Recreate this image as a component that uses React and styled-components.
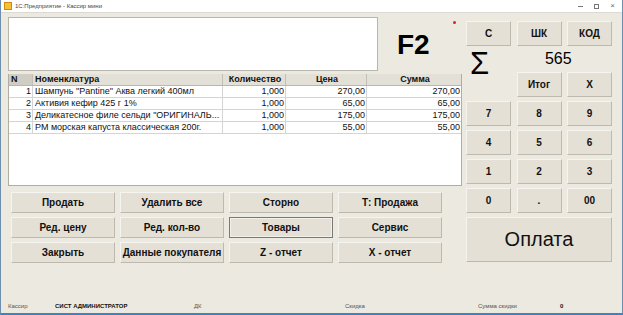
import React from "react";
import styled, { createGlobalStyle } from "styled-components";

const GlobalStyle = createGlobalStyle`
  html, body {
    margin: 0;
    padding: 0;
    background: #ffffff;
  }
  body {
    font-family: "Liberation Sans", Arial, sans-serif;
  }
`;

const Window = styled.div`
  width: 623px;
  height: 315px;
  box-sizing: border-box;
  display: flex;
  flex-direction: column;
  background: #ece9e0;
  border-left: 1px solid #6d8fae;
  border-right: 1px solid #6d8fae;
  border-bottom: 2px solid #3f82c2;
  overflow: hidden;
`;

const TitleBar = styled.div`
  height: 13px;
  flex: none;
  display: flex;
  align-items: center;
  background: #ffffff;
  border-bottom: 1px solid #dcdad4;
  box-sizing: border-box;
  padding-left: 3px;
`;

const AppIcon = styled.div`
  width: 8px;
  height: 8px;
  background: #f4c430;
  border: 1px solid #d08a10;
  box-sizing: border-box;
  margin-right: 3px;
`;

const Title = styled.div`
  font-size: 6px;
  color: #444;
  flex: 1;
`;

const Controls = styled.div`
  display: flex;
  align-items: center;
  gap: 11px;
  padding-right: 7px;
  color: #666;
`;

const Minimize = styled.div`
  width: 5px;
  height: 1px;
  background: #777;
`;

const Maximize = styled.div`
  width: 5px;
  height: 5px;
  border: 1px solid #777;
  box-sizing: border-box;
`;

const Close = styled.div`
  font-size: 8px;
  line-height: 8px;
  color: #666;
`;

const Main = styled.div`
  display: flex;
  gap: 4px;
  padding: 4px 0 0 7px;
`;

const LeftCol = styled.div`
  width: 454px;
  display: flex;
  flex-direction: column;
`;

const TopRow = styled.div`
  height: 55px;
  display: flex;
  align-items: stretch;
`;

const Memo = styled.div`
  width: 370px;
  height: 54px;
  box-sizing: border-box;
  background: #ffffff;
  border: 1px solid #b8b5ad;
`;

const Display = styled.div`
  position: relative;
  flex: 1;
  display: flex;
  align-items: center;
  padding-left: 19px;
  font-size: 28px;
  font-weight: bold;
  color: #000;
`;

const RedDot = styled.div`
  position: absolute;
  left: 75px;
  top: 4px;
  width: 3px;
  height: 3px;
  border-radius: 50%;
  background: #e02020;
`;

const Table = styled.div`
  margin-top: 2px;
  height: 112px;
  box-sizing: border-box;
  background: #ffffff;
  border: 1px solid #b0ada5;
  border-top: none;
`;

const Row = styled.div`
  display: grid;
  grid-template-columns: 24px 190px 63px 81px 1fr;
  height: 11px;
  border-bottom: 1px solid ${({ $head }) => ($head ? "#b9b6ae" : "#d4d4d4")};
  background: ${({ $head }) => ($head ? "#e3e0d8" : "#ffffff")};
  box-sizing: content-box;
`;

const Cell = styled.div`
  font-size: 9px;
  line-height: 11px;
  font-weight: ${({ $head }) => ($head ? "bold" : "normal")};
  color: #111;
  white-space: nowrap;
  overflow: hidden;
  text-align: ${({ $align }) => $align || "left"};
  padding: ${({ $align }) => ($align === "right" ? "0 1px 0 0" : "0 0 0 2px")};
  border-right: 1px solid ${({ $head }) => ($head ? "#c2bfb7" : "#d4d4d4")};
  background: ${({ $dark }) => ($dark ? "#d0cdc5" : "transparent")};
  &:last-child {
    border-right: none;
  }
`;

const Actions = styled.div`
  margin-top: 6px;
  padding-left: 3px;
  display: grid;
  grid-template-columns: repeat(4, 104px);
  grid-auto-rows: 21px;
  column-gap: 5px;
  row-gap: 4px;
`;

const Btn = styled.button`
  margin: 0;
  padding: 0;
  background: #e4e0d6;
  border: 1px solid;
  border-color: ${({ $focused }) =>
    $focused ? "#7a7872" : "#f6f4ef #bdb9ae #bdb9ae #f6f4ef"};
  box-shadow: ${({ $focused }) => ($focused ? "inset 0 0 0 1px #f2f0ea" : "none")};
  font-family: "Liberation Sans", Arial, sans-serif;
  font-size: ${({ $big }) => ($big ? "20px" : "10px")};
  font-weight: ${({ $big }) => ($big ? "normal" : "bold")};
  color: #111;
  white-space: nowrap;
  grid-column: ${({ $span }) => ($span ? `span ${$span}` : "auto")};
`;

const Keypad = styled.div`
  padding-top: 4px;
  display: grid;
  grid-template-columns: repeat(3, 45px);
  grid-template-rows: 25px 18px 25px 25px 25px 25px 25px 45px;
  column-gap: 5.5px;
  row-gap: 4px;
`;

const Sigma = styled.div`
  font-size: 31px;
  line-height: 18px;
  padding: 5px 0 0 4px;
  color: #000;
`;

const Total = styled.div`
  grid-column: span 2;
  text-align: center;
  padding-right: 12px;
  font-size: 16px;
  line-height: 18px;
  color: #000;
`;

const Blank = styled.div``;

const StatusBar = styled.div`
  margin-top: auto;
  height: 10px;
  margin-bottom: 2px;
  display: flex;
  align-items: center;
  padding-left: 7px;
  font-size: 6px;
  color: #555;
`;

const StatusItem = styled.div`
  width: ${({ $w }) => ($w ? `${$w}px` : "auto")};
  font-weight: ${({ $bold }) => ($bold ? "bold" : "normal")};
  color: ${({ $bold }) => ($bold ? "#111" : "#555")};
  white-space: nowrap;
`;

const items = [
  { n: 1, name: 'Шампунь "Pantine" Аква легкий 400мл', qty: "1,000", price: "270,00", sum: "270,00" },
  { n: 2, name: "Активия кефир 425 г 1%", qty: "1,000", price: "65,00", sum: "65,00" },
  { n: 3, name: 'Деликатесное филе сельди "ОРИГИНАЛЬ...', qty: "1,000", price: "175,00", sum: "175,00" },
  { n: 4, name: "РМ морская капуста классическая 200г.", qty: "1,000", price: "55,00", sum: "55,00" },
];

const actions = [
  "Продать", "Удалить все", "Сторно", "Т: Продажа",
  "Ред. цену", "Ред. кол-во", "Товары", "Сервис",
  "Закрыть", "Данные покупателя", "Z - отчет", "X - отчет",
];

const digits = ["7", "8", "9", "4", "5", "6", "1", "2", "3", "0", ".", "00"];

const App = () => {
  return (
    <>
      <GlobalStyle />
      <Window>
        <TitleBar>
          <AppIcon />
          <Title>1С:Предприятие - Кассир мини</Title>
          <Controls>
            <Minimize />
            <Maximize />
            <Close>×</Close>
          </Controls>
        </TitleBar>
        <Main>
          <LeftCol>
            <TopRow>
              <Memo />
              <Display>
                F2
                <RedDot />
              </Display>
            </TopRow>
            <Table>
              <Row $head>
                <Cell $head $dark>N</Cell>
                <Cell $head>Номенклатура</Cell>
                <Cell $head $align="center">Количество</Cell>
                <Cell $head $align="center">Цена</Cell>
                <Cell $head $align="center">Сумма</Cell>
              </Row>
              {items.map((it) => (
                <Row key={it.n}>
                  <Cell $align="right">{it.n}</Cell>
                  <Cell>{it.name}</Cell>
                  <Cell $align="right">{it.qty}</Cell>
                  <Cell $align="right">{it.price}</Cell>
                  <Cell $align="right">{it.sum}</Cell>
                </Row>
              ))}
            </Table>
            <Actions>
              {actions.map((a) => (
                <Btn key={a} $focused={a === "Товары"}>
                  {a}
                </Btn>
              ))}
            </Actions>
          </LeftCol>
          <Keypad>
            <Btn>С</Btn>
            <Btn>ШК</Btn>
            <Btn>КОД</Btn>
            <Sigma>Σ</Sigma>
            <Total>565</Total>
            <Blank />
            <Btn>Итог</Btn>
            <Btn>X</Btn>
            {digits.map((d) => (
              <Btn key={d}>{d}</Btn>
            ))}
            <Btn $big $span={3}>Оплата</Btn>
          </Keypad>
        </Main>
        <StatusBar>
          <StatusItem $w={47}>Кассир</StatusItem>
          <StatusItem $w={139} $bold>СИСТ АДМИНИСТРАТОР</StatusItem>
          <StatusItem $w={151}>ДК</StatusItem>
          <StatusItem $w={133}>Скидка</StatusItem>
          <StatusItem $w={82}>Сумма скидки</StatusItem>
          <StatusItem $bold>0</StatusItem>
        </StatusBar>
      </Window>
    </>
  );
};

export default App;
